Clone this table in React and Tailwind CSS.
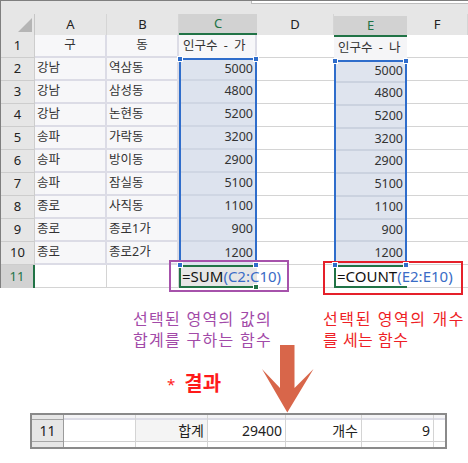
import React from "react";

// sheet data: 구, 동, 인구수
const ROWS = [
  ["강남", "역삼동", 5000],
  ["강남", "삼성동", 4800],
  ["강남", "논현동", 5200],
  ["송파", "가락동", 3200],
  ["송파", "방이동", 2900],
  ["송파", "잠실동", 5100],
  ["종로", "사직동", 1100],
  ["종로", "종로1가", 900],
  ["종로", "종로2가", 1200],
];

const Handle = ({ className }) => (
  <span className={`absolute w-[6px] h-[6px] bg-[#2f6dcb] border border-white ${className}`} />
);

const ColHeader = ({ label, active }) =>
  active ? (
    <div className="h-[21px] flex items-center justify-center bg-[#d2d2d2] border-b-2 border-[#217346] text-[#217346] text-[13px]">
      {label}
    </div>
  ) : (
    <div className="h-[21px] flex items-center justify-center bg-[#e6e6e6] border-r border-[#d5d5d5] text-[#222] text-[13px]">
      {label}
    </div>
  );

const TextCol = ({ label, title, idx, width }) => (
  <div className={`${width} flex flex-col`}>
    <ColHeader label={label} />
    <div className="h-[23px] flex items-center justify-center bg-[#f7f7f9] border-b-2 border-r-2 border-[#dcdce6]">
      {title}
    </div>
    {ROWS.map((r, i) => (
      <div
        key={i}
        className="h-[23px] flex items-center pl-[2px] bg-[#f7f7f9] border-b-2 border-r-2 border-[#dcdce6]"
      >
        {r[idx]}
      </div>
    ))}
    <div className="h-[23px] bg-white border-b border-r border-[#d4d4d4]" />
  </div>
);

const EmptyCol = ({ label, width }) => (
  <div className={`${width} flex flex-col`}>
    <ColHeader label={label} />
    {Array.from({ length: 11 }).map((_, i) => (
      <div key={i} className="h-[23px] bg-white border-b border-[#d4d4d4]" />
    ))}
  </div>
);

export default function App() {
  return (
    <div className="w-[468px] h-[463px] bg-white overflow-hidden font-['Noto_Sans','Noto_Sans_CJK_KR',sans-serif] text-[12.5px] text-[#333]">
      {/* top sheet */}
      <div className="border-t border-l border-[#7f7f7f] bg-[#e6e6e6]">
        <div className="h-[13px]">
          <div className="ml-[250px] h-[3px] bg-white border-l border-b border-[#bcbcbc]" />
        </div>

        <div className="flex items-start">
          {/* row numbers */}
          <div className="w-[34px] flex flex-col">
            <div className="h-[21px] relative bg-[#e6e6e6] border-r border-[#c6c6c6]">
              <div className="absolute right-[2px] bottom-[3px] w-0 h-0 border-l-[14px] border-b-[14px] border-l-transparent border-b-[#b5b5b5]" />
            </div>
            {Array.from({ length: 10 }).map((_, i) => (
              <div
                key={i}
                className="h-[23px] flex items-center justify-center bg-[#e6e6e6] border-r border-b border-[#cdcdcd] text-[13px] text-[#222]"
              >
                {i + 1}
              </div>
            ))}
            <div className="h-[23px] flex items-center justify-center bg-[#d2d2d2] border-r-2 border-[#217346] text-[13px] text-[#217346]">
              11
            </div>
          </div>

          <TextCol label="A" title="구" idx={0} width="w-[72px]" />
          <TextCol label="B" title="동" idx={1} width="w-[72px]" />

          {/* C column */}
          <div className="w-[78px] flex flex-col">
            <ColHeader label="C" active />
            <div className="h-[23px] flex items-center pl-[4px] bg-[#f7f7f9] border-r-2 border-[#dcdce6] whitespace-nowrap [word-spacing:3px]">
              인구수 - 가
            </div>
            <div className="relative border-x-2 border-t-2 border-[#2f6dcb] bg-[#dde3ee]">
              {ROWS.map((r, i) => (
                <div
                  key={i}
                  className={`${i === 0 ? "h-[21px]" : "h-[23px]"} flex items-center justify-end pr-[2px] ${
                    i < 8 ? "border-b-2 border-[#cfd6e3]" : ""
                  }`}
                >
                  {r[2]}
                </div>
              ))}
              <Handle className="-left-[4px] -top-[4px]" />
              <Handle className="-right-[4px] -top-[4px]" />
              <Handle className="-left-[4px] -bottom-[3px] z-20" />
              <Handle className="-right-[4px] -bottom-[3px] z-20" />
            </div>
            <div className="relative z-10 h-[23px] flex items-center border-l-2 border-y-2 border-[#217346] pl-[1px] text-[15px] text-[#111] whitespace-nowrap">
              =SUM<span className="text-[#3a6cc6]">(C2:C10)</span>
              <span className="absolute -right-[2px] -bottom-[4px] w-[6px] h-[6px] bg-[#217346] border border-white" />
              <span className="absolute -left-[12px] -top-[7px] w-[120px] h-[32px] border-2 border-[#a652ab]" />
            </div>
          </div>

          <EmptyCol label="D" width="w-[77px]" />

          {/* E column, pasted a little lower */}
          <div className="w-[73px] pt-[2px] flex flex-col bg-[#e6e6e6]">
            <ColHeader label="E" active />
            <div className="h-[23px] flex items-center pl-[4px] bg-[#f5f5f7] whitespace-nowrap [word-spacing:3px]">
              인구수 - 나
            </div>
            <div className="relative border-x-2 border-t-2 border-[#2f6dcb] bg-[#dfe4ee]">
              {ROWS.map((r, i) => (
                <div
                  key={i}
                  className={`${i === 0 ? "h-[21px]" : "h-[22.75px]"} flex items-center justify-end pr-[2px] ${
                    i < 8 ? "border-b-2 border-[#cbd2df]" : ""
                  }`}
                >
                  {r[2]}
                </div>
              ))}
              <Handle className="-left-[4px] -top-[4px]" />
              <Handle className="-right-[4px] -top-[4px]" />
              <Handle className="-left-[4px] -bottom-[3px] z-20" />
              <Handle className="-right-[4px] -bottom-[3px] z-20" />
            </div>
            <div className="relative z-10 h-[23px] flex items-center bg-white border-l-2 border-y-2 border-[#217346] pl-[1px] text-[15px] text-[#111] whitespace-nowrap">
              =COUNT
              <span className="inline-block w-px h-[22px] bg-black" />
              <span className="text-[#3a6cc6]">(E2:E10)</span>
              <span className="absolute -left-[13px] -top-[6px] w-[140px] h-[34px] border-2 border-[#e5202a]" />
            </div>
          </div>

          <div className="flex-1">
            <EmptyCol label="F" width="w-full" />
          </div>
        </div>
      </div>

      {/* annotations */}
      <div className="flex pt-[21px] text-[16px] leading-[21px] whitespace-nowrap">
        <div className="ml-[133px] w-[190px] text-[#a24aa8] tracking-[1.3px]">
          <div>선택된 영역의 값의</div>
          <div>합계를 구하는 함수</div>
        </div>
        <div className="text-[#ee1f26]">
          <div className="tracking-[1.6px]">선택된 영역의 개수</div>
          <div className="tracking-[0.5px]">를 세는 함수</div>
        </div>
      </div>

      <div className="flex items-start -mt-[6px] pl-[167px]">
        <div className="w-[95px] pt-[25px] flex items-center gap-[9px] text-[#ff1a1a]">
          <span className="text-[15px] leading-[28px]">*</span>
          <span className="text-[20px] leading-[28px] font-bold">결과</span>
        </div>
        <svg width="52" height="68" viewBox="0 0 52 68">
          <polygon points="18,0 32.5,0 32.5,43 51.5,24 25.3,67.5 0,24 18,43" fill="#d8664a" />
        </svg>
      </div>

      {/* result sheet */}
      <div className="ml-[30px] w-[417px] flex border-2 border-[#8a8a8a] text-[14px] text-[#222]">
        <div className="w-[32px] flex flex-col bg-[#e6e6e6] border-r border-[#9b9b9b]">
          <div className="h-[5px] border-b border-[#a5a5a5]" />
          <div className="h-[21px] flex items-center justify-center">11</div>
          <div className="h-[6px] border-t border-[#a5a5a5]" />
        </div>
        {[
          ["w-[72px]", "", "bg-white"],
          ["w-[72px]", "합계", "bg-[#f4f4f4]"],
          ["w-[78px]", "29400", "bg-white"],
          ["w-[76px]", "개수", "bg-white"],
          ["w-[72px]", "9", "bg-white"],
          ["flex-1", "", "bg-white"],
        ].map(([w, text, bg], i) => (
          <div key={i} className={`${w} flex flex-col border-r border-[#d4d4d4] last:border-r-0`}>
            <div className="h-[5px] bg-[#f4f4f6] border-b-2 border-[#dcdce6]" />
            <div className={`h-[21px] flex items-center justify-end pr-[3px] ${bg}`}>{text}</div>
            <div className="h-[6px] bg-white border-t border-[#d0d0d0]" />
          </div>
        ))}
      </div>
    </div>
  );
}
